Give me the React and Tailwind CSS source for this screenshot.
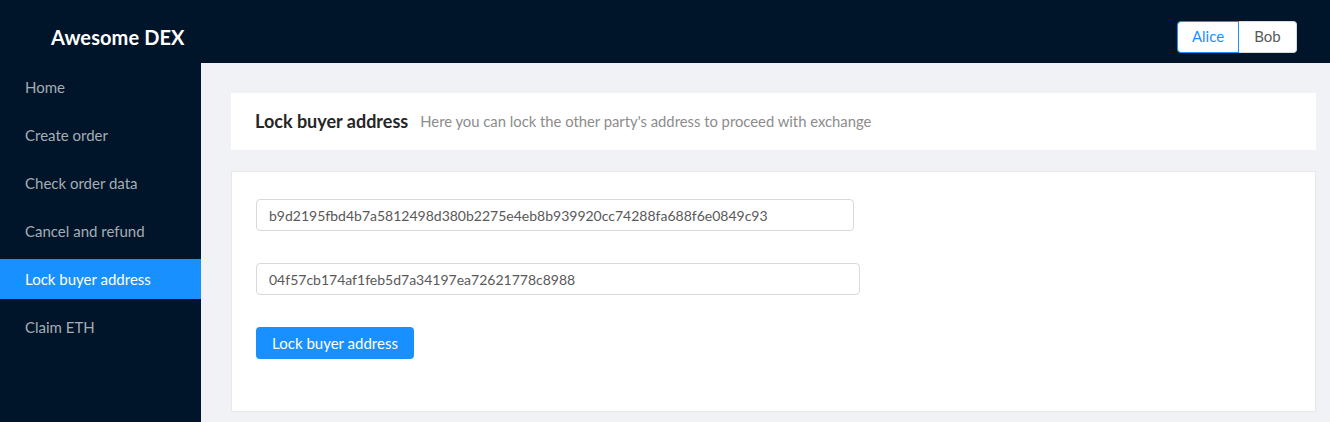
const menu = ["Home", "Create order", "Check order data", "Cancel and refund", "Lock buyer address", "Claim ETH"];

export default function App() {
  return (
    <div className="w-[1330px] h-[422px] overflow-hidden flex flex-col bg-[#f0f2f5] font-['Lato',sans-serif]">
      {/* Header */}
      <div className="h-[63px] bg-[#001529] flex items-center justify-between pl-[51px] pr-[33px] pt-[10px] shrink-0">
        <div className="text-white text-[20px] font-bold tracking-[0.1px]">Awesome DEX</div>
        <div className="flex h-8 text-[15px]">
          <button className="w-[62px] bg-white border border-[#1890ff] text-[#1890ff] rounded-l">Alice</button>
          <button className="w-[58px] bg-white border border-l-0 border-[#d9d9d9] text-[#595959] rounded-r">Bob</button>
        </div>
      </div>

      <div className="flex flex-1 min-h-0">
        {/* Sidebar */}
        <div className="w-[201px] bg-[#001529] pt-1 shrink-0">
          {menu.map((m) => (
            <div
              key={m}
              className={
                m === "Lock buyer address"
                  ? "h-10 mb-2 flex items-center pl-[25px] text-[15px] bg-[#1890ff] text-white"
                  : "h-10 mb-2 flex items-center pl-[25px] text-[15px] text-[#a6adb4]"
              }
            >
              {m}
            </div>
          ))}
        </div>

        {/* Content */}
        <div className="flex-1 pl-[30px] pr-[14px] pt-[30px] flex flex-col gap-[21px]">
          <div className="bg-white h-[57px] flex items-center px-6 gap-3">
            <span className="text-[18px] font-bold text-[#262626]">Lock buyer address</span>
            <span className="text-[14.8px] text-[#8c8c8c]">Here you can lock the other party's address to proceed with exchange</span>
          </div>

          <div className="bg-white border border-[#e8e8e8] h-[241px] px-6 pt-[27px] flex flex-col items-start">
            <input
              readOnly
              value="b9d2195fbd4b7a5812498d380b2275e4eb8b939920cc74288fa688f6e0849c93"
              className="w-[598px] h-8 border border-[#d9d9d9] rounded px-3 text-[14px] text-[#595959] outline-none"
            />
            <input
              readOnly
              value="04f57cb174af1feb5d7a34197ea72621778c8988"
              className="w-[604px] h-8 mt-8 border border-[#d9d9d9] rounded px-3 text-[14px] text-[#595959] outline-none"
            />
            <button className="mt-8 h-8 w-[158px] bg-[#1890ff] text-white text-[15px] rounded">Lock buyer address</button>
          </div>
        </div>
      </div>
    </div>
  );
}
